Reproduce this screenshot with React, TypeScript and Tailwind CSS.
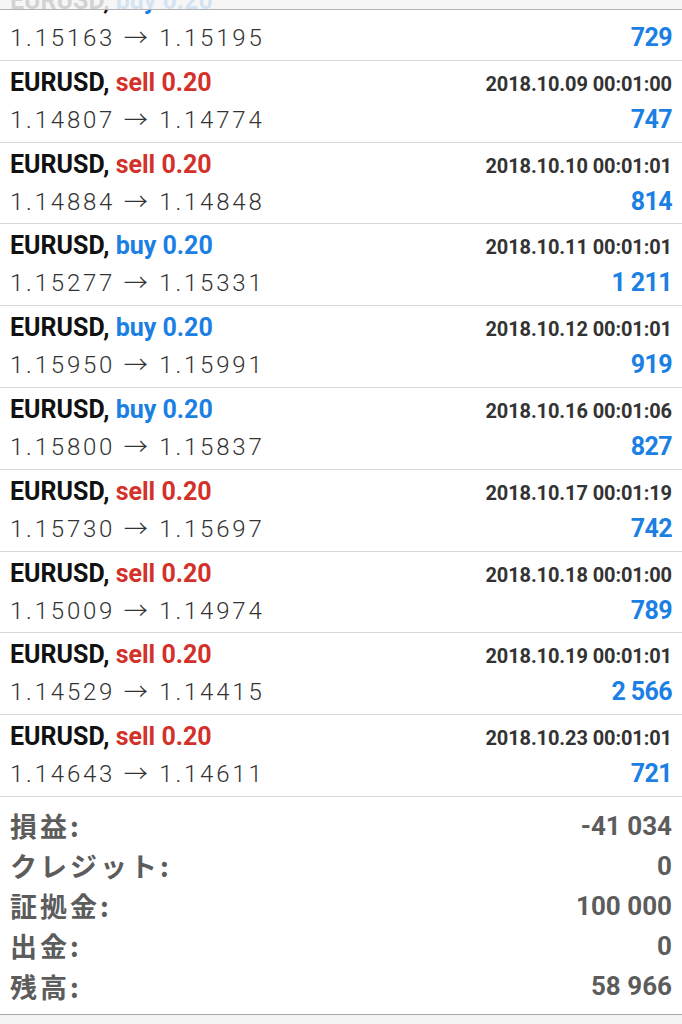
import React from "react";

type Trade = {
  side: "buy" | "sell";
  date: string;
  open: string;
  close: string;
  profit: string;
};

const trades: Trade[] = [
  { side: "buy", date: "", open: "1.15163", close: "1.15195", profit: "729" },
  { side: "sell", date: "2018.10.09 00:01:00", open: "1.14807", close: "1.14774", profit: "747" },
  { side: "sell", date: "2018.10.10 00:01:01", open: "1.14884", close: "1.14848", profit: "814" },
  { side: "buy", date: "2018.10.11 00:01:01", open: "1.15277", close: "1.15331", profit: "1 211" },
  { side: "buy", date: "2018.10.12 00:01:01", open: "1.15950", close: "1.15991", profit: "919" },
  { side: "buy", date: "2018.10.16 00:01:06", open: "1.15800", close: "1.15837", profit: "827" },
  { side: "sell", date: "2018.10.17 00:01:19", open: "1.15730", close: "1.15697", profit: "742" },
  { side: "sell", date: "2018.10.18 00:01:00", open: "1.15009", close: "1.14974", profit: "789" },
  { side: "sell", date: "2018.10.19 00:01:01", open: "1.14529", close: "1.14415", profit: "2 566" },
  { side: "sell", date: "2018.10.23 00:01:01", open: "1.14643", close: "1.14611", profit: "721" },
];

const summary = [
  { label: "損益:", value: "-41 034" },
  { label: "クレジット:", value: "0" },
  { label: "証拠金:", value: "100 000" },
  { label: "出金:", value: "0" },
  { label: "残高:", value: "58 966" },
];

const TradeRow = ({ t }: { t: Trade }) => {
  return (
    <div className="h-[81.8px] border-b border-[#d9d9d9] px-[10px]">
      <div className="flex items-baseline justify-between h-[38px] pt-[3px] leading-[38px]">
        <span className="text-[25px] font-bold text-[#111]">
          EURUSD,{" "}
          <span className={t.side === "sell" ? "text-[#d3312a]" : "text-[#1b7fe3]"}>
            {t.side} 0.20
          </span>
        </span>
        <span className="text-[20px] font-bold tracking-[-0.1px] text-[#333]">{t.date}</span>
      </div>
      <div className="flex items-baseline justify-between h-[40px] pt-[1px] leading-[40px]">
        <span className="text-[24px] font-light tracking-[2.8px] text-[#333]">
          {t.open} → {t.close}
        </span>
        <span className="text-[25px] font-bold tracking-[-0.6px] text-[#1b7fe3]">{t.profit}</span>
      </div>
    </div>
  );
};

export default function App() {
  return (
    <div
      className="relative w-[682px] h-[1024px] overflow-hidden bg-white"
      style={{ fontFamily: "Roboto, 'Noto Sans CJK JP', sans-serif" }}
    >
      <div className="absolute top-0 left-0 right-0 h-[10px] bg-[#f4f4f4]/85 border-b border-[#b3b3b3] z-10"></div>
      <div className="-mt-[21px]">
        {trades.map((t, i) => (
          <TradeRow key={i} t={t} />
        ))}
        <div className="pt-[9px] pb-[7px] px-[10px] border-b border-[#a9a9a9]">
          {summary.map((s) => (
            <div key={s.label} className="flex items-center justify-between h-[40.2px]">
              <span
                className="text-[27px] font-bold tracking-[3px] text-[#5c5c5c]"
                style={{ fontFamily: "'Noto Sans CJK JP', sans-serif" }}
              >
                {s.label}
              </span>
              <span className="text-[26px] font-bold text-[#5c5c5c]">{s.value}</span>
            </div>
          ))}
        </div>
        <div className="h-[40px] bg-[#f4f4f4]"></div>
      </div>
    </div>
  );
}
